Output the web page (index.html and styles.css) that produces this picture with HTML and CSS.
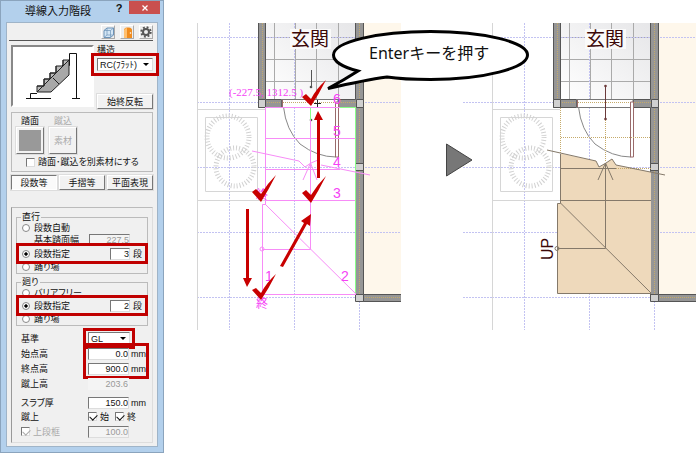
FILE: index.html
```html
<!DOCTYPE html>
<html lang="ja">
<head>
    <meta charset="UTF-8">
    <meta name="viewport" content="width=device-width, initial-scale=1.0">
    <title>導線入力階段</title>
    <link rel="stylesheet" href="styles.css">
</head>
<body>

    <form class="dialog">
        <header class="titlebar">
            <h1>導線入力階段</h1>
            <button type="button" class="help">?</button>
            <button type="button" class="close" aria-label="閉じる">
                <svg width="6" height="6" viewBox="0 0 6 6"><path d="M0.5 0.5L5.5 5.5M5.5 0.5L0.5 5.5" stroke="#fff" stroke-width="1.3"/></svg>
            </button>
        </header>

        <div class="content">
            <div class="toolbar">
                <button type="button" class="tool" aria-label="3D表示">
                    <svg width="11" height="11" viewBox="0 0 11 11" fill="#d4e6f5" stroke="#6d93b8"><path d="M1 3.5L4 1H10.5V8L7.5 10.5H1Z"/><path d="M1 3.5H7.5V10.5M7.5 3.5L10.5 1M4 1V8L1 10.5M4 8H10.5" fill="none" stroke-width=".7"/></svg>
                </button>
                <button type="button" class="tool" aria-label="建具">
                    <svg width="11" height="11" viewBox="0 0 11 11"><path d="M2 11V3Q2 1 5 0.5H7Q10 1 10 3V11Z" fill="#f08c1e"/><path d="M2 11V3Q3 1 5 1V11Z" fill="#ffc070"/><circle cx="8.5" cy="6" r=".8" fill="#fff"/></svg>
                </button>
                <button type="button" class="tool" aria-label="設定">
                    <svg width="12" height="12" viewBox="0 0 12 12" fill="none" stroke="#555"><circle cx="6" cy="6" r="4.7" stroke-width="2" stroke-dasharray="1.85 1.85"/><circle cx="6" cy="6" r="3" stroke-width="2"/></svg>
                </button>
            </div>

            <div class="structure">
                <div class="preview">
                    <svg width="79" height="58" viewBox="14 47 79 58">
                        <path d="M27 98.5H52M31.5 98V93.5H38M63 65.5H70.500V53.500H77.500V98.500M73 98.500H81" fill="none" stroke="#111"/>
                        <path d="M38 92L70 60V75L52 92Z" fill="#a8a8a8" stroke="#222"/>
                        <path d="M38 92V86H45V79H51V73H57V66H64V60H70L38 92Z" fill="#bbb" stroke="#222"/>
                        <path d="M45 86V79M51 79V73M57 73V66M64 66V60M38 86H45M45 79H51M51 73H57M54 78L60 84" fill="none" stroke="#222"/>
                    </svg>
                </div>
                <div class="structure-side">
                    <label for="structure">構造</label>
                    <div class="select mark">
                        <select id="structure"><option>RC(ﾌﾗｯﾄ)</option></select>
                    </div>
                    <button type="button" class="btn reverse">始終反転</button>
                </div>
            </div>

            <div class="material">
                <div class="material-row">
                    <div class="material-item">
                        <span>踏面</span>
                        <button type="button" class="btn swatch" aria-label="踏面"><i></i></button>
                    </div>
                    <div class="material-item off">
                        <span>蹴込</span>
                        <button type="button" class="btn swatch" disabled>素材</button>
                    </div>
                </div>
                <label class="check"><input type="checkbox">踏面･蹴込を別素材にする</label>
            </div>

            <div class="tabs">
                <button type="button" class="btn active">段数等</button>
                <button type="button" class="btn">手摺等</button>
                <button type="button" class="btn">平面表現</button>
            </div>

            <div class="panel">
                <fieldset>
                    <legend>直行</legend>
                    <label class="line"><input type="radio" name="straight">段数自動</label>
                    <div class="line sub">
                        <label for="tread">基本踏面幅</label>
                        <input type="text" id="tread" value="227.5" disabled>
                    </div>
                    <div class="line marked">
                        <label><input type="radio" name="straight" checked>段数指定</label>
                        <input type="text" class="short" value="3" aria-label="直行の段数">段
                    </div>
                    <label class="line"><input type="radio" name="straight">踊り場</label>
                </fieldset>

                <fieldset class="turn">
                    <legend>廻り</legend>
                    <label class="line"><input type="radio" name="turn">バリアフリー</label>
                    <div class="line marked">
                        <label><input type="radio" name="turn" checked>段数指定</label>
                        <input type="text" class="short" value="2" aria-label="廻りの段数">段
                    </div>
                    <label class="line"><input type="radio" name="turn">踊り場</label>
                </fieldset>

                <div class="heights">
                    <label for="base">基準</label>
                    <div class="select mark"><select id="base"><option>GL</option></select></div>

                    <label for="start">始点高</label>
                    <div class="value"><input type="text" id="start" value="0.0">mm</div>

                    <label for="end">終点高</label>
                    <div class="value mark-two"><input type="text" id="end" value="900.0">mm</div>

                    <label for="riser">蹴上高</label>
                    <div class="value"><input type="text" id="riser" class="flat" value="203.6" disabled></div>

                    <label for="slab" class="gap">スラブ厚</label>
                    <div class="value gap"><input type="text" id="slab" value="150.0">mm</div>

                    <span>蹴上</span>
                    <div class="value">
                        <label class="check"><input type="checkbox" checked>始</label>
                        <label class="check"><input type="checkbox" checked>終</label>
                    </div>

                    <label class="check off"><input type="checkbox" checked disabled>上段框</label>
                    <div class="value"><input type="text" value="100.0" aria-label="上段框" disabled></div>
                </div>
            </div>
        </div>
    </form>

    <main class="plans">
        <svg viewBox="164 0 532 453" role="img" aria-label="階段の平面図">
            <defs>
                <linearGradient id="floor" x1="0" y1="1" x2="1" y2="0">
                    <stop offset="0" stop-color="#fff"/>
                    <stop offset="1" stop-color="#e6e6e8"/>
                </linearGradient>

                <!-- room, walls and door shared by both plans -->
                <g id="plan">
                    <rect x="363" y="23" width="38" height="272" fill="#fef7eb"/>
                    <rect x="266" y="23" width="90" height="77" fill="url(#floor)"/>
                    <path class="tile" d="M274.5 23V100M295.5 23V100M316.5 23V100M338.5 23V100M266 37.5H356M266 59.5H356M266 81.5H356"/>
                    <path class="grid" d="M229.5 23V330M294.5 23V330M359.5 301V330M197 37.5H401M197 102.5H401M197 167.5H401M197 232.5H401M197 297.5H401"/>
                    <path class="pale" d="M197.5 23V330M197 109.5H265M197 200.5H265M205.5 117.5H257.5V191.5H205.5Z"/>
                    <g class="ring">
                        <circle cx="228" cy="137" r="21"/>
                        <circle cx="235" cy="167" r="19"/>
                    </g>
                    <g class="wall">
                        <path d="M258.5 23V107.5H281.5V99.5H265.5V23"/>
                        <path d="M355.5 23V99.5H338.5V107.5H355.5V295H363.5V23"/>
                        <path d="M401 294.5H363V301.5H401"/>
                    </g>
                    <path d="M282 99.5H338V107.5H282Z" fill="#fff" stroke="#777"/>
                    <path class="core" d="M262.5 23V102.5H281M283 102.5H356M359.5 23V297.5H401"/>
                    <path d="M258.5 99.5H265.5V107.5H258.5ZM356.5 99.5H363.5V107.5H356.5ZM355.5 163.5H363.5V170.5H355.5ZM355.5 294.5H363.5V301.5H355.5Z" fill="#d0d0d0" stroke="#555"/>
                    <path d="M283.5 107Q286 130 300 144Q317 157 336 157" fill="none" stroke="#888"/>
                    <path d="M282.5 100V107M335.5 102V157H338.5V102Z" fill="#fff" stroke="#9a6b6b"/>
                    <path d="M290 29H331V49H290Z" fill="#fafafa"/>
                    <text class="room" x="291" y="46">玄関</text>
                </g>
            </defs>

            <!-- before: walking line being entered -->
            <use href="#plan"/>
            <path d="M311.5 70V87" stroke="#555"/>
            <circle cx="311" cy="87" r="1.3" fill="#555"/>
            <circle cx="311" cy="120" r="1.3" fill="#555"/>
            <path d="M317.5 100V107M314 103.5H321" stroke="#222"/>
            <path d="M355.5 108V294M310.5 108V140M340 107.5H356" stroke="#8f8" fill="none"/>
            <g class="pink">
                <path d="M265.5 107V204.5H262.5V294.5H356M265 107.5H340M265 138.5H355M265 169.5H340M265 200.5H355M310.5 120V249.5H262M265 204L356 294"/>
                <path d="M252 151L299 161L305 167L311 163L318 160M321 165L370 175M303 180L310.5 163L317 180"/>
                <circle cx="262" cy="249" r="2"/>
            </g>
            <g class="pink-text">
                <text x="229" y="96" class="coord">(-227.5, 1312.5 )</text>
                <text x="333" y="104">6</text>
                <text x="333" y="136">5</text>
                <text x="333" y="167">4</text>
                <text x="333" y="198">3</text>
                <text x="341" y="281">2</text>
                <text x="265" y="281">1</text>
                <text x="256" y="199" class="kanji">終</text>
                <text x="256" y="308" class="kanji">終</text>
            </g>
            <g class="red">
                <path d="M302 97L306 94L311 99Q316 89 326 80Q319 94 311 106Z"/>
                <path d="M252 192L256 189L261 194Q267 184 276 175Q269 189 261 202Z"/>
                <path d="M302 193L306 190L311 195Q317 185 326 176Q319 190 311 203Z"/>
                <path d="M252 290L256 288L261 293Q267 282 276 274Q269 288 261 300Z"/>
                <path d="M317 178V120H314L318 111L323 120H320V178Z"/>
                <path d="M246 209V278H243L247 287L252 278H249V209Z"/>
                <path d="M280 266L304 223L301 221L311 214L310 226L307 224L283 267Z"/>
            </g>

            <!-- step arrow -->
            <path d="M446.5 144L472 160L446.5 176Z" fill="#777" stroke="#444"/>

            <!-- after: finished stairs -->
            <path class="grid" d="M463 102.5H492M463 167.5H492M463 232.5H492M463 297.5H492"/>
            <use href="#plan" x="295"/>
            <path d="M560.5 153.5L596 161L599 167L606 163L612 159L616 165L651 172V293.5H557.5V203.5H560.5Z" fill="#eed9bb"/>
            <path class="core" d="M560.5 108V153M605.5 108V162M561 137.5H651M616 168.5H651"/>
            <path class="thin" d="M547 150L596 161L599 167L606 163L612 159L616 165L665 175M560.5 154V203.5H557.5V293.5H651M561 168.5H616M561 200.5H651M605.5 164V248.5H557M598 180L605.5 163L613 180M560.5 203L651 293"/>
            <circle class="thin" cx="557" cy="248.5" r="2"/>
            <path d="M605.5 86V119" stroke="#6b3a3a"/>
            <circle cx="605.5" cy="86" r="1.3" fill="#6b3a3a"/>
            <circle cx="605.5" cy="119" r="1.3" fill="#6b3a3a"/>
            <text class="up" transform="rotate(-90 553 260)" x="553" y="260">UP</text>

            <!-- callout -->
            <path class="bubble" d="M358 71C342 67 333.5 61 333.5 55C333.5 42 377 31.5 430.5 31.5S527.5 42 527.5 55S484 79.5 430.5 79.5C415 79.5 400 79 387 77Q365 80 328 88.5Q344 80 358 71Z"/>
            <text class="callout" x="369" y="59">Enterキーを押す</text>
        </svg>
    </main>

</body>
</html>
```
FILE: styles.css
```css
* {
    margin: 0;
    padding: 0;
    box-sizing: border-box;
}

body {
    display: flex;
    align-items: flex-start;
    background: #fff;
    font-family: "Liberation Sans", "Noto Sans CJK JP", sans-serif;
    font-size: 9px;
    line-height: 10px;
    color: #111;
}

button,
input,
select {
    font: inherit;
    color: inherit;
}

/* Dialog */
.dialog {
    flex: none;
    width: 164px;
    padding: 0 5px 5px;
    background: #b3d0ec;
    border: 1px solid #8ba4bd;
    font-feature-settings: "palt";
}

.titlebar {
    display: flex;
    height: 21px;
}

.titlebar h1 {
    flex: 1;
    padding-left: 19px;
    font-size: 11px;
    font-weight: normal;
    line-height: 20px;
    white-space: nowrap;
}

.help {
    width: 20px;
    height: 14px;
    border: 0;
    background: none;
    font-size: 11px;
    font-weight: bold;
}

.close {
    display: flex;
    align-items: center;
    justify-content: center;
    width: 31px;
    height: 13px;
    margin-right: -2px;
    border: 0;
    background: #c9504e;
}

.content {
    padding: 0 4px 3px;
    background: #f0f0f0;
    border: 1px solid #9fb4c8;
}

/* Toolbar */
.toolbar {
    display: flex;
    justify-content: flex-end;
    gap: 5px;
    height: 18px;
    padding: 2px 0;
    margin-left: -2px;
    border-bottom: 1px solid #555;
}

.tool {
    display: flex;
    align-items: center;
    justify-content: center;
    width: 14px;
    height: 14px;
    border: 1px solid;
    border-color: #fff #aaa #aaa #fff;
    background: #eee;
}

/* Structure type */
.structure {
    display: flex;
    gap: 3px;
    margin-top: 4px;
}

.preview {
    width: 83px;
    height: 62px;
    border: 2px solid;
    border-color: #888 #fff #fff #888;
    background: #fff;
}

.preview svg {
    display: block;
}

.structure-side {
    display: flex;
    flex-direction: column;
    flex: 1;
    height: 64px;
}

.structure-side .select {
    margin-top: 3px;
}

.btn {
    border: 1px solid;
    border-color: #fff #777 #777 #fff;
    box-shadow: 0 0 0 1px #ddd;
    background: #f2f2f2;
    white-space: nowrap;
}

.reverse {
    height: 15px;
    margin-top: auto;
}

.select {
    position: relative;
    height: 13px;
}

.select select {
    display: block;
    width: 100%;
    height: 13px;
    padding-left: 2px;
    appearance: none;
    border: 1px solid;
    border-color: #777 #ddd #ddd #777;
    border-radius: 0;
    background: #fff;
    line-height: 10px;
}

.select::before {
    content: "";
    position: absolute;
    right: 4px;
    top: 5px;
    border: 3px solid transparent;
    border-top-color: #000;
    border-bottom: 0;
}

/* Red frames over the fields to fill in */
.mark::after,
.mark-two::after {
    content: "";
    position: absolute;
    inset: -5px -6px;
    border: 3px solid #c00000;
    pointer-events: none;
}

/* Materials */
.material {
    height: 60px;
    margin-top: 3px;
    padding: 3px 4px;
    border: 1px solid #bbb;
}

.material-row {
    display: flex;
    gap: 5px;
}

.material-item {
    display: flex;
    flex-direction: column;
    align-items: center;
    gap: 1px;
}

.swatch {
    width: 28px;
    height: 27px;
    padding: 2px;
}

.swatch i {
    display: block;
    height: 100%;
    background: #999;
}

.off,
.off label,
button:disabled {
    color: #aaa;
}

.check {
    display: flex;
    align-items: center;
    gap: 3px;
    white-space: nowrap;
}

.material .check {
    margin: 3px 0 0 10px;
}

input[type="checkbox"] {
    flex: none;
    width: 9px;
    height: 9px;
    appearance: none;
    border: 1px solid;
    border-color: #777 #ddd #ddd #777;
    background: #fff;
}

input[type="checkbox"]:checked::before {
    content: "";
    display: block;
    width: 6px;
    height: 4px;
    margin: 1px 0 0 1px;
    border: solid #111;
    border-width: 0 0 1px 1px;
    transform: rotate(-45deg);
}

input[type="checkbox"]:disabled::before {
    border-color: #aaa;
}

input[type="radio"] {
    flex: none;
    width: 8px;
    height: 8px;
    margin-right: 4px;
    appearance: none;
    border: 1px solid #888;
    border-radius: 50%;
    background: #fff;
}

input[type="radio"]:checked {
    background: radial-gradient(#000 30%, #fff 50%);
}

/* Tabs */
.tabs {
    display: grid;
    grid-template-columns: 1fr 1fr 1fr;
    gap: 2px;
    margin-top: 3px;
}

.tabs .btn {
    height: 15px;
}

.tabs .active {
    border-color: #777 #fff #fff #777;
    background: #fafafa;
}

/* Panel */
.panel {
    height: 236px;
    margin-top: 17px;
    padding: 4px;
    border: 1px solid;
    border-color: #bbb #ddd #ddd #999;
}

fieldset {
    height: 62px;
    padding: 0 5px;
    border: 1px solid #bbb;
}

fieldset.turn {
    height: 49px;
    margin-top: 3px;
}

legend {
    height: 10px;
    padding: 0 1px;
    margin-left: -1px;
}

.line {
    display: flex;
    align-items: center;
    height: 12px;
    white-space: nowrap;
}

.sub {
    justify-content: space-between;
    padding: 0 12px;
}

.marked {
    position: relative;
    z-index: 1;
    height: 21px;
    margin: -3px -6px;
    padding: 0 3px;
    border: 3px solid #c00000;
    background: #f0f0f0;
}

.marked label {
    display: flex;
    flex: 1;
    align-items: center;
}

.turn .marked {
    margin-top: -4px;
}

input[type="text"] {
    width: 41px;
    height: 12px;
    border: 1px solid;
    border-color: #777 #ddd #ddd #777;
    background: #fff;
    text-align: right;
}

input[type="text"].short {
    width: 20px;
    margin-right: 3px;
}

input[type="text"]:disabled {
    color: #999;
    background: #f4f4f4;
}

input[type="text"].flat {
    border-color: transparent;
}

/* Heights */
.heights {
    display: grid;
    grid-template-columns: 67px 1fr;
    grid-auto-rows: 15px;
    align-items: center;
    margin-top: 5px;
    padding-left: 5px;
}

.heights .select {
    width: 42px;
}

.heights .select.mark::after {
    inset: -4px -5px;
}

.heights .gap {
    margin-top: 4px;
    margin-bottom: -4px;
}

.value {
    display: flex;
    align-items: center;
    position: relative;
    gap: 2px;
}

.value .check {
    width: 25px;
}

.mark-two::after {
    inset: -20px -1px -4px -5px;
}

.heights > :nth-child(n + 11) {
    margin-top: 3px;
    margin-bottom: -3px;
}

/* Floor plans */
.plans {
    flex: 1;
    min-width: 0;
}

.plans svg {
    display: block;
    width: 100%;
}

.grid {
    fill: none;
    stroke: #c3c3f2;
    stroke-dasharray: 2 1;
}

.tile {
    fill: none;
    stroke: #aaa;
}

.pale {
    fill: none;
    stroke: #d6d6d6;
}

.ring {
    fill: none;
    stroke: #d2d2d2;
    stroke-width: 5;
    stroke-dasharray: 1 2;
}

.wall {
    fill: #969696;
    stroke: #555;
}

.core {
    fill: none;
    stroke: #c5aa6a;
    stroke-dasharray: 1 1;
}

.thin {
    fill: none;
    stroke: #84796a;
}

.room {
    font-size: 19px;
    fill: #3c0808;
}

.pink {
    fill: none;
    stroke: #f78cf7;
}

.pink-text {
    font-size: 14px;
    fill: #f542f5;
}

.coord {
    font-family: "Liberation Serif", serif;
    font-size: 11px;
}

.kanji {
    font-size: 12px;
}

.red {
    fill: #c80000;
}

.up {
    font-size: 16px;
    fill: #3c0808;
}

.bubble {
    fill: #fff;
    stroke: #000;
    stroke-width: 3;
}

.callout {
    font-family: "Noto Sans", "Noto Sans CJK JP", sans-serif;
    font-size: 16px;
    fill: #111;
}
```
